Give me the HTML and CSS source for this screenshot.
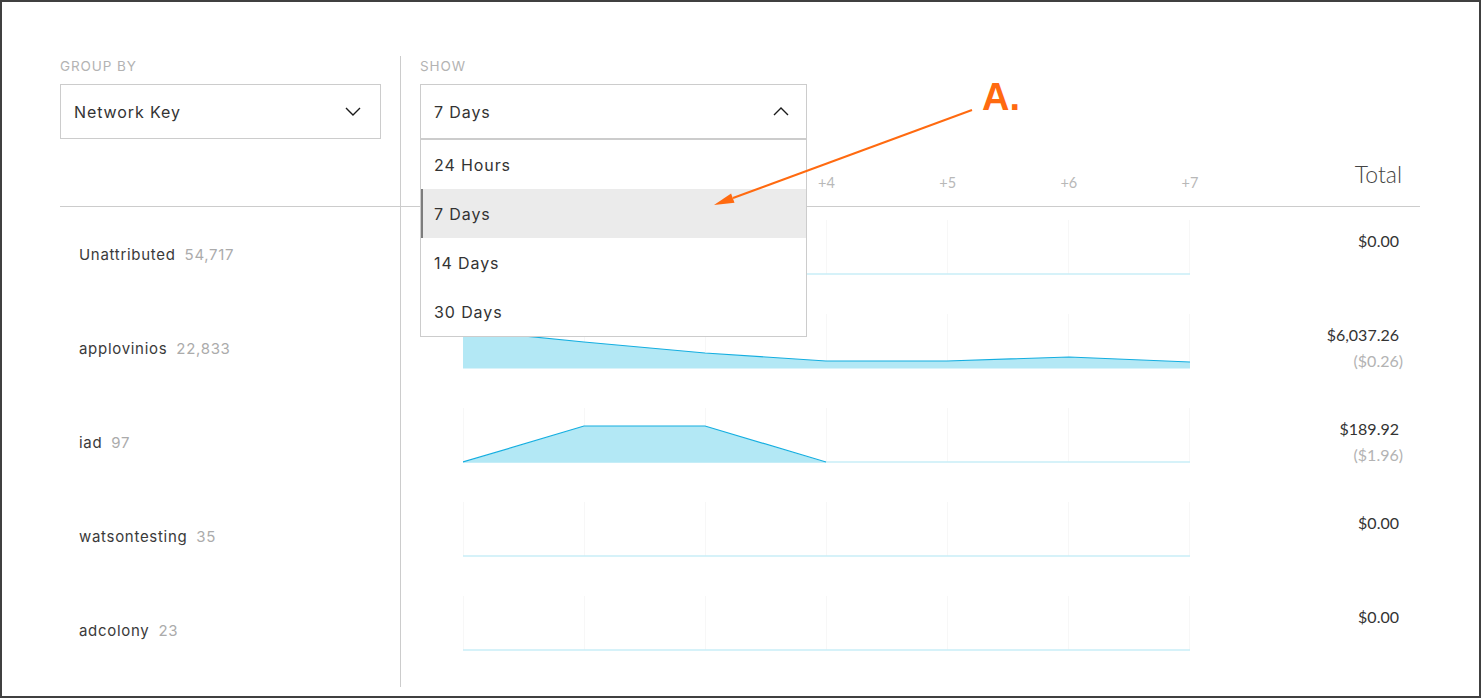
FILE: index.html
```html
<!DOCTYPE html>
<html>
<head>
<meta charset="utf-8">
<link rel="stylesheet" href="styles.css">
</head>
<body>
<div class="frame">
  <div class="row controls">
    <div class="left">
      <div class="label">GROUP BY</div>
      <div class="select sel-group">
        <span>Network Key</span>
        <svg class="chev" width="16" height="9" viewBox="0 0 16 9"><polyline points="1,1 8,8 15,1"/></svg>
      </div>
    </div>
    <div class="right">
      <div class="label">SHOW</div>
      <div class="select-wrap">
        <div class="select sel-show">
          <span>7 Days</span>
          <svg class="chev" width="16" height="9" viewBox="0 0 16 9"><polyline points="1,8 8,1 15,8"/></svg>
        </div>
        <ul class="menu">
          <li class="item">24 Hours</li>
          <li class="item active">7 Days</li>
          <li class="item">14 Days</li>
          <li class="item">30 Days</li>
        </ul>
      </div>
    </div>
  </div>

  <div class="row header">
    <div class="left"></div>
    <div class="right">
      <div class="ticks">
        <div class="tick">+1</div><div class="tick">+2</div><div class="tick">+3</div><div class="tick">+4</div><div class="tick">+5</div><div class="tick">+6</div><div class="tick">+7</div>
      </div>
      <div class="total-head">Total</div>
    </div>
  </div>

  <div class="row data">
    <div class="left"><span class="name">Unattributed</span><span class="count">54,717</span></div>
    <div class="right">
      <svg class="chart" width="727" height="55" viewBox="0 0 727 55">
        <g class="grid"><line x1="0.5" y1="0" x2="0.5" y2="54"/><line x1="121.5" y1="0" x2="121.5" y2="54"/><line x1="242.5" y1="0" x2="242.5" y2="54"/><line x1="363.5" y1="0" x2="363.5" y2="54"/><line x1="484.5" y1="0" x2="484.5" y2="54"/><line x1="605.5" y1="0" x2="605.5" y2="54"/><line x1="726.5" y1="0" x2="726.5" y2="54"/></g>
        <line class="base" x1="0" y1="54" x2="727" y2="54"/>
      </svg>
      <div class="total"><div class="val">$0.00</div></div>
    </div>
  </div>

  <div class="row data">
    <div class="left"><span class="name">applovinios</span><span class="count">22,833</span></div>
    <div class="right">
      <svg class="chart" width="727" height="55" viewBox="0 0 727 55">
        <g class="grid"><line x1="0.5" y1="0" x2="0.5" y2="54"/><line x1="121.5" y1="0" x2="121.5" y2="54"/><line x1="242.5" y1="0" x2="242.5" y2="54"/><line x1="363.5" y1="0" x2="363.5" y2="54"/><line x1="484.5" y1="0" x2="484.5" y2="54"/><line x1="605.5" y1="0" x2="605.5" y2="54"/><line x1="726.5" y1="0" x2="726.5" y2="54"/></g>
        <polygon class="area" points="0,16 121,28 242,39 363,47 484,47 606,43 727,48 727,54.5 0,54.5"/>
        <polyline class="stroke" points="0,16 121,28 242,39 363,47 484,47 606,43 727,48"/>
      </svg>
      <div class="total"><div class="val">$6,037.26</div><div class="sub">($0.26)</div></div>
    </div>
  </div>

  <div class="row data">
    <div class="left"><span class="name">iad</span><span class="count">97</span></div>
    <div class="right">
      <svg class="chart" width="727" height="55" viewBox="0 0 727 55">
        <g class="grid"><line x1="0.5" y1="0" x2="0.5" y2="54"/><line x1="121.5" y1="0" x2="121.5" y2="54"/><line x1="242.5" y1="0" x2="242.5" y2="54"/><line x1="363.5" y1="0" x2="363.5" y2="54"/><line x1="484.5" y1="0" x2="484.5" y2="54"/><line x1="605.5" y1="0" x2="605.5" y2="54"/><line x1="726.5" y1="0" x2="726.5" y2="54"/></g>
        <line class="base" x1="0" y1="54" x2="727" y2="54"/>
        <polygon class="area" points="0,54.5 121,18 242,18 363,54.5"/>
        <polyline class="stroke" points="0,54 121,18 242,18 363,54"/>
      </svg>
      <div class="total"><div class="val">$189.92</div><div class="sub">($1.96)</div></div>
    </div>
  </div>

  <div class="row data">
    <div class="left"><span class="name">watsontesting</span><span class="count">35</span></div>
    <div class="right">
      <svg class="chart" width="727" height="55" viewBox="0 0 727 55">
        <g class="grid"><line x1="0.5" y1="0" x2="0.5" y2="54"/><line x1="121.5" y1="0" x2="121.5" y2="54"/><line x1="242.5" y1="0" x2="242.5" y2="54"/><line x1="363.5" y1="0" x2="363.5" y2="54"/><line x1="484.5" y1="0" x2="484.5" y2="54"/><line x1="605.5" y1="0" x2="605.5" y2="54"/><line x1="726.5" y1="0" x2="726.5" y2="54"/></g>
        <line class="base" x1="0" y1="54" x2="727" y2="54"/>
      </svg>
      <div class="total"><div class="val">$0.00</div></div>
    </div>
  </div>

  <div class="row data">
    <div class="left"><span class="name">adcolony</span><span class="count">23</span></div>
    <div class="right">
      <svg class="chart" width="727" height="55" viewBox="0 0 727 55">
        <g class="grid"><line x1="0.5" y1="0" x2="0.5" y2="54"/><line x1="121.5" y1="0" x2="121.5" y2="54"/><line x1="242.5" y1="0" x2="242.5" y2="54"/><line x1="363.5" y1="0" x2="363.5" y2="54"/><line x1="484.5" y1="0" x2="484.5" y2="54"/><line x1="605.5" y1="0" x2="605.5" y2="54"/><line x1="726.5" y1="0" x2="726.5" y2="54"/></g>
        <line class="base" x1="0" y1="54" x2="727" y2="54"/>
      </svg>
      <div class="total"><div class="val">$0.00</div></div>
    </div>
  </div>

  <div class="row spacer"><div class="left"></div></div>

  <svg class="annot-arrow" width="1481" height="698" viewBox="0 0 1481 698">
    <line x1="972" y1="110" x2="733" y2="198"/>
    <polygon points="714,205 734.5,202.8 731.1,193.4"/>
  </svg>
  <div class="annot-label">A.</div>
</div>
</body>
</html>
```

FILE: styles.css
```css
html, body {
  margin: 0;
  padding: 0;
  background: #ffffff;
}

body {
  font-family: "Inter", "Noto Sans", "DejaVu Sans", sans-serif;
  color: #333333;
}

.frame {
  position: relative;
  width: 1481px;
  height: 698px;
  box-sizing: border-box;
  border: 2px solid #404040;
  padding: 54px 0 0 58px;
  overflow: hidden;
}

.row {
  display: flex;
  width: 1360px;
}

.left {
  width: 341px;
  box-sizing: border-box;
  border-right: 1px solid #cccccc;
  flex: none;
}

.right {
  flex: 1;
  display: flex;
  min-width: 0;
}

/* controls */
.controls .right {
  flex-direction: column;
  padding-left: 19px;
}

.label {
  font-size: 13.5px;
  line-height: 16px;
  color: #b3b3b3;
  letter-spacing: 0.9px;
  margin-top: 2px;
  margin-bottom: 10px;
}

.select {
  height: 55px;
  box-sizing: border-box;
  border: 1px solid #cccccc;
  display: flex;
  align-items: center;
  justify-content: space-between;
  padding: 0 19px 0 13px;
  font-size: 16px;
  letter-spacing: 0.9px;
  color: #333333;
  background: #ffffff;
}

.sel-group {
  width: 321px;
}

.sel-show {
  width: 387px;
  padding-right: 17px;
}

.chev polyline {
  fill: none;
  stroke: #1a1a1a;
  stroke-width: 1.4;
}

.select-wrap {
  position: relative;
  width: 387px;
}

.menu {
  position: absolute;
  top: 100%;
  left: 0;
  z-index: 5;
  width: 387px;
  box-sizing: border-box;
  margin: 0;
  padding: 0;
  list-style: none;
  border: 1px solid #cccccc;
  background: #ffffff;
}

.item {
  height: 49px;
  display: flex;
  align-items: center;
  padding-left: 13px;
  font-size: 16px;
  letter-spacing: 0.9px;
  color: #333333;
}

.item.active {
  background: #ebebeb;
  border-left: 2px solid #7d7d7d;
  padding-left: 11px;
}

/* header */
.header {
  height: 68px;
  box-sizing: border-box;
  border-bottom: 1px solid #cccccc;
}

.header .right {
  align-items: flex-end;
}

.ticks {
  width: 727px;
  margin-left: 62px;
  display: flex;
  justify-content: space-between;
  padding-bottom: 15px;
}

.tick {
  width: 0;
  display: flex;
  justify-content: center;
  white-space: nowrap;
  font-family: "Lato", "Open Sans", sans-serif;
  font-size: 14.5px;
  line-height: 16px;
  color: #b8b8b8;
}

.total-head {
  flex: 1;
  text-align: right;
  font-family: "Lato", "Open Sans", sans-serif;
  font-weight: 300;
  font-size: 23px;
  line-height: 26px;
  color: #444444;
  padding-bottom: 19px;
  margin-right: -3px;
  padding-right: 21px;
}

/* data rows */
.data {
  height: 94px;
}

.data .left {
  display: flex;
  align-items: center;
  padding-left: 19px;
  font-size: 15px;
  letter-spacing: 0.7px;
}

.name {
  color: #3a3a3a;
}

.count {
  color: #ababab;
  margin-left: 9px;
}

.chart {
  display: block;
  margin-left: 62px;
  margin-top: 13px;
  flex: none;
}

.grid line {
  stroke: #f7f7f7;
  stroke-width: 1;
}

.base {
  stroke: #c9eef7;
  stroke-width: 1.5;
}

.area {
  fill: #b3e8f5;
}

.stroke {
  fill: none;
  stroke: #14aee0;
  stroke-width: 1.2;
}

.total {
  flex: 1;
  text-align: right;
  padding-top: 21px;
  padding-right: 21px;
  font-family: "Lato", "Open Sans", sans-serif;
  font-size: 16px;
  line-height: 26px;
}

.val {
  color: #333333;
}

.sub {
  color: #b3b3b3;
  margin-right: -4px;
}

.spacer {
  height: 10px;
}

.spacer .left {
  height: 10px;
}

/* annotation overlay */
.annot-arrow {
  position: absolute;
  left: -2px;
  top: -2px;
  pointer-events: none;
  z-index: 10;
}

.annot-arrow line {
  stroke: #ff6a10;
  stroke-width: 2;
}

.annot-arrow polygon {
  fill: #ff6a10;
}

.annot-label {
  position: absolute;
  left: 980px;
  top: 76px;
  z-index: 10;
  font-family: "Liberation Sans", Arial, sans-serif;
  font-weight: bold;
  font-size: 38px;
  line-height: 38px;
  color: #ff6a10;
}
```
